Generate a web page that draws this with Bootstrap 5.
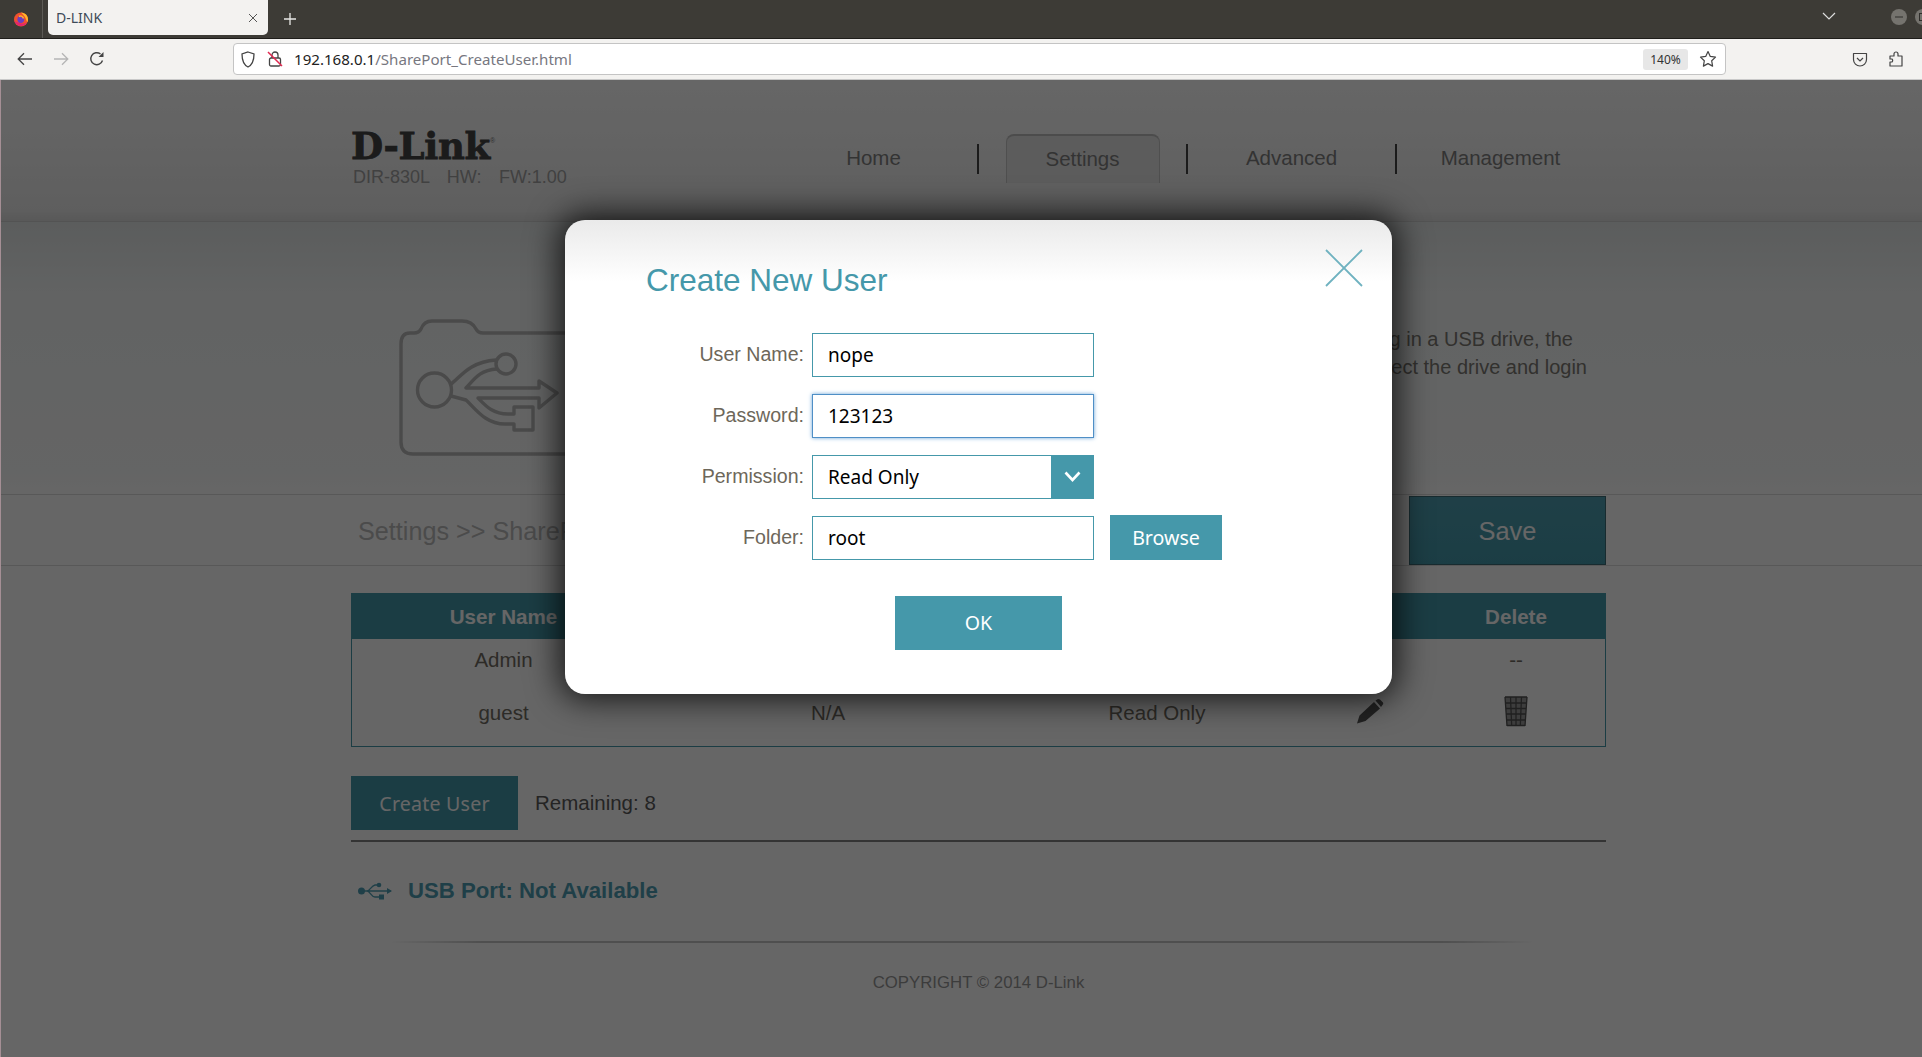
<!DOCTYPE html>
<html lang="en">
<head>
    <meta charset="UTF-8">
    <meta name="viewport" content="width=device-width, initial-scale=1.0">
    <link href="https://cdn.jsdelivr.net/npm/bootstrap@5.3.3/dist/css/bootstrap.min.css" rel="stylesheet">
    <script src="https://cdn.jsdelivr.net/npm/bootstrap@5.3.3/dist/js/bootstrap.bundle.min.js"></script>
    <title>D-LINK</title>
    <style>
        html, body { height: 100%; overflow: hidden; background: #fff; }
        body { font-family: "Liberation Sans", Arial, sans-serif; font-size: 19.6px; color: #6e6a62; }

        /* browser frame */
        .tabbar { height: 39px; width: 1956px; background: #3d3b36; border-bottom: 1px solid #1f1e1b; }
        .tabbar > * { flex: none; }
        .ff-slot { width: 43px; height: 38px; border-right: 1px solid #5c5a55; }
        .tab-item { width: 220px; height: 35px; margin-left: 5px; background: #f3f2f0; border-radius: 0 0 5px 5px; padding: 0 10px 0 8px; font: 14px "Noto Sans", sans-serif; color: #3d4a58; }
        .plus-slot { width: 44px; height: 38px; }
        .tabs-chevron { height: 32px; margin-left: 1510px; }
        .win-group { height: 34px; margin-left: 55px; }
        .win-btn { width: 16px; height: 16px; border-radius: 50%; background: #75736e; flex: none; }
        .toolbar { height: 41px; width: 1956px; padding-left: 7px; background: #f3f2f0; border-bottom: 1px solid #c9c9c9; }
        .tool-slot { width: 36px; height: 40px; flex: none; }
        .urlbar { width: 1493px; height: 32px; margin: 0 116px 0 118px; background: #fff; border: 1px solid #c4c4c4; border-radius: 4px; padding: 0 4px 0 6px; flex: none; font: 15.1px "Noto Sans", sans-serif; }
        .url-host { color: #222; }
        .url-path { color: #77777f; }
        .zoom-pill { width: 45px; height: 21px; background: #e7e7e7; border-radius: 3px; font-size: 12px; color: #333; }

        /* router page */
        .page-wrap { position: relative; height: 977px; width: 1956px; background: #fff; border-left: 1px solid #a58f95; }
        .router-head { height: 141px; background: linear-gradient(#fff 0, #f8f8f8 60px, #ececec 130px, #dedede 140px); padding-left: 350px; }
        .brand-col { width: 419px; padding-top: 49px; }
        .brand-name { font: 700 37px/34px "DejaVu Serif", serif; letter-spacing: -.3px; color: #444; white-space: nowrap; -webkit-text-stroke: .8px #444; }
        .brand-name sup { font: 400 7px "Liberation Sans", sans-serif; top: -16px; color: #777; -webkit-text-stroke: 0; }
        .brand-sub { font-size: 18px; line-height: 22px; color: #a2a2a2; word-spacing: 12.5px; margin: 3px 0 0 2px; white-space: nowrap; }
        .nav-cell { width: 207px; height: 141px; padding-top: 16px; font-size: 20.5px; color: #818181; }
        .nav-sep { width: 2px; height: 30px; margin-top: 16px; background: #444; flex: none; }
        .nav-cell.active-tab > span { width: 154px; height: 49px; background: #e6e6e6; border: 1px solid #c6c6c6; border-top: 2px solid #bdbdbd; border-bottom: 0; border-radius: 8px 8px 0 0; }

        .intro-band { height: 273px; width: 1956px; background: linear-gradient(#e4e8e8 0, #f4f7f7 70px, #fbfcfc 250px, #fff 100%); border-top: 1px solid #d0d0d0; padding: 0 351px 0 350px; }
        .folder-icon { flex: none; display: block; }
        .intro-text { font-size: 20px; line-height: 28px; color: #7d7a74; padding-top: 103px; }
        .intro-a { padding-right: 33px; }
        .intro-b { padding-right: 19px; }

        .title-band { height: 72px; width: 1956px; border-top: 1px solid #dcdcdc; border-bottom: 1px solid #dcdcdc; padding: 0 351px 0 357px; }
        .crumb { font-size: 25.2px; padding-top: 3px; color: #bcbcbc; }
        .save-btn { width: 197px; height: 69px; padding-top: 8px; border: 1px solid #3c6c77; border-radius: 0; color: #fff; font-size: 25.4px; background: linear-gradient(#4f9fb2, #459aab); }
        .save-btn:hover { color: #fff; }

        .user-box { width: 1255px; margin: 27px 0 0 350px; border: 1px solid #4598aa; border-top: 0; }
        .user-table { margin: 0; table-layout: fixed; --bs-table-bg: transparent; }
        .user-table th { height: 46px; background: #4598aa; color: #fff; font-size: 20.6px; font-weight: 700; text-align: center; vertical-align: middle; padding: 2px 0 0; }
        .user-table td { text-align: center; vertical-align: middle; color: #716c62; padding: 0; font-size: 20.5px; }
        .user-table tr.row-a td { height: 42px; }
        .user-table tr.row-b td { height: 65px; }
        .col-name { width: 303px; }
        .col-path { width: 346px; }
        .col-perm { width: 312px; }
        .col-edit { width: 114px; }
        .row-icon { display: block; margin: -5px auto 0; }

        .add-row { width: 1255px; margin: 29px 0 0 350px; padding-bottom: 10px; border-bottom: 2px solid #838383; }
        .teal-btn { background: #4598aa; color: #fff; border: 0; border-radius: 0; font: 19.6px "Noto Sans", sans-serif; }
        .teal-btn:hover, .teal-btn:focus { background: #4598aa; color: #fff; }
        .create-btn { width: 167px; height: 54px; letter-spacing: .2px; }
        .remain-text { margin-left: 17px; padding-top: 1px; color: #5a5a5a; font-size: 20.5px; }
        .usb-row { margin: 31px 0 0 357px; height: 36px; color: #4f9fb4; font-size: 22.2px; font-weight: 700; }
        .fade-line { height: 2px; margin: 32px 0 0 389px; width: 1144px; background: linear-gradient(90deg, transparent, #c6c6c6 8%, #c6c6c6 92%, transparent); }
        .copy-line { margin-top: 27px; text-align: center; font-size: 16.8px; color: #979797; }

        /* dialog */
        .dim-layer { position: absolute; inset: 0; background: rgba(0, 0, 0, .6); padding-top: 140px; }
        .dialog-box { position: relative; width: 827px; height: 474px; border-radius: 20px; background: linear-gradient(#eaeaea 0, #fff 62px); box-shadow: 0 0 32px 6px rgba(0, 0, 0, .75); padding: 42px 0 0 81px; }
        .dialog-title { font-size: 31.5px; line-height: 36px; font-weight: 400; color: #4598aa; margin: 0 0 35px; }
        .close-x { position: absolute; right: 29px; top: 29px; }
        .form-line { height: 44px; margin-bottom: 16.9px; margin-left: -81px; }
        .form-line label { width: 239px; text-align: right; margin: 0 8px 0 0; color: #6d675a; font-size: 19.6px; }
        .field-wide { width: 282px; height: 44px; }
        .router-input { border: 1px solid #4598aa; border-radius: 0; padding: 0 15px; color: #000; font: 19px "Noto Sans", sans-serif; }
        .router-input.is-focused { border-color: #4f8fc6; box-shadow: 0 0 4px #6aa5d8; }
        .select-input { border: 1px solid #4598aa; background: #fff; }
        .select-input select { flex: 1; min-width: 0; border: 0; background: #fff; appearance: none; padding: 0 15px; font: 19px "Noto Sans", sans-serif; color: #000; }
        .select-arrow { width: 43px; margin: -1px -1px -1px 0; background: #4598aa; flex: none; }
        .browse-btn { width: 112px; height: 45px; margin-left: 16px; padding: 0; }
        .ok-btn { width: 167px; height: 54px; padding: 0; margin: 36px 0 0 249px; display: block; }
    </style>
</head>
<body>
    <div class="tabbar d-flex align-items-start">
        <div class="ff-slot d-flex align-items-center justify-content-center">
            <svg width="16" height="16" viewBox="0 0 16 16">
                <circle cx="8" cy="8.500" r="7" fill="#f0502e"/>
                <path d="M8 1.500c4 .3 7 3 7 7 0 1-.3 2-.7 2.800L12 6 9.500 3z" fill="#ffb52a"/>
                <path d="M1.500 10c1 3 3.500 5 6.500 5s5-1.500 6-3.500C12 13 9 13 6.500 12z" fill="#e3246f"/>
                <circle cx="7.800" cy="8.500" r="3.400" fill="#6a3ec2"/>
                <path d="M6 5.500c2-1 4 0 4.500 2" stroke="#ffb52a" stroke-width="1.500" fill="none"/>
            </svg>
        </div>
        <div class="tab-item d-flex align-items-center">
            <span class="flex-grow-1">D-LINK</span>
            <svg width="10" height="10" viewBox="0 0 10 10"><path d="M1 1l8 8M9 1l-8 8" stroke="#555" stroke-width="1"/></svg>
        </div>
        <div class="plus-slot d-flex align-items-center justify-content-center">
            <svg width="14" height="14" viewBox="0 0 14 14"><path d="M7 1v12M1 7h12" stroke="#e8e8e6" stroke-width="1.300"/></svg>
        </div>
        <div class="tabs-chevron d-flex align-items-center">
            <svg width="14" height="8" viewBox="0 0 14 8"><path d="M1 1l6 6 6-6" stroke="#ddd" stroke-width="1.200" fill="none"/></svg>
        </div>
        <div class="win-group d-flex align-items-center gap-2">
            <span class="win-btn d-flex align-items-center justify-content-center"><svg width="8" height="2"><path d="M0 1h8" stroke="#2f2e2b"/></svg></span>
            <span class="win-btn d-flex align-items-center justify-content-center"><svg width="9" height="8"><rect x=".5" y=".5" width="8" height="7" stroke="#2f2e2b" fill="none"/></svg></span>
        </div>
    </div>
    <div class="toolbar d-flex align-items-center">
        <div class="tool-slot d-flex align-items-center justify-content-center">
            <svg width="16" height="14" viewBox="0 0 16 14"><path d="M15 7H1.500M7 1.200L1.200 7 7 12.800" stroke="#444" stroke-width="1.300" fill="none"/></svg>
        </div>
        <div class="tool-slot d-flex align-items-center justify-content-center">
            <svg width="16" height="14" viewBox="0 0 16 14"><path d="M1 7h13.500M9 1.200L14.800 7 9 12.800" stroke="#b5b5b5" stroke-width="1.300" fill="none"/></svg>
        </div>
        <div class="tool-slot d-flex align-items-center justify-content-center">
            <svg width="16" height="16" viewBox="0 0 16 16"><path d="M13.500 9.500A6 6 0 1 1 11.500 3" stroke="#444" stroke-width="1.400" fill="none"/><path d="M14.500 1v5h-5z" fill="#444"/></svg>
        </div>
        <div class="urlbar d-flex align-items-center">
            <svg width="16" height="17" viewBox="0 0 16 17"><path d="M8 1l6 2c0 6-1 10.500-6 13C3 13.500 2 9 2 3z" stroke="#444" stroke-width="1.300" fill="none"/></svg>
            <svg width="16" height="18" viewBox="0 0 16 18" style="margin-left:11px"><rect x="2.500" y="8" width="11" height="8" rx="1.500" stroke="#444" stroke-width="1.300" fill="none"/><path d="M5 8V5a3 3 0 0 1 6 0v3" stroke="#444" stroke-width="1.300" fill="none"/><path d="M1 2l14 14" stroke="#e22850" stroke-width="1.500"/></svg>
            <span style="margin-left:11px"><span class="url-host">192.168.0.1</span><span class="url-path">/SharePort_CreateUser.html</span></span>
            <span class="ms-auto zoom-pill d-flex align-items-center justify-content-center">140%</span>
            <svg width="18" height="18" viewBox="0 0 18 18" style="margin:0 4px 0 11px"><path d="M9 1.500l2.300 4.900 5.200.7-3.800 3.700.9 5.300L9 13.600l-4.600 2.500.9-5.300L1.500 7.100l5.200-.7z" stroke="#444" stroke-width="1.200" fill="none" stroke-linejoin="round"/></svg>
        </div>
        <div class="tool-slot d-flex align-items-center justify-content-center">
            <svg width="16" height="15" viewBox="0 0 16 15"><path d="M1.500 1.500h13v6a6.500 6.500 0 0 1-13 0z" stroke="#444" stroke-width="1.200" fill="none" stroke-linejoin="round"/><path d="M5 6l3 3 3-3" stroke="#444" stroke-width="1.200" fill="none"/></svg>
        </div>
        <div class="tool-slot d-flex align-items-center justify-content-center">
            <svg width="16" height="18" viewBox="0 0 16 18"><path d="M2 6h4V4a2 2 0 0 1 4 0v2h4v10H2v-4h2a2 2 0 0 0 0-3H2z" stroke="#444" stroke-width="1.200" fill="none" stroke-linejoin="round"/></svg>
        </div>
    </div>

    <div class="page-wrap">
        <div class="router-head d-flex">
            <div class="brand-col">
                <div class="brand-name">D-Link<sup>®</sup></div>
                <div class="brand-sub">DIR-830L HW: FW:1.00</div>
            </div>
            <div class="nav-cell d-flex align-items-center justify-content-center">Home</div>
            <div class="nav-sep align-self-center"></div>
            <div class="nav-cell active-tab d-flex align-items-center justify-content-center"><span class="d-flex align-items-center justify-content-center">Settings</span></div>
            <div class="nav-sep align-self-center"></div>
            <div class="nav-cell d-flex align-items-center justify-content-center">Advanced</div>
            <div class="nav-sep align-self-center"></div>
            <div class="nav-cell d-flex align-items-center justify-content-center">Management</div>
        </div>

        <div class="intro-band d-flex">
            <svg class="folder-icon" width="225" height="272">
                <g transform="translate(-11 -20)" fill="none" stroke="#b8b8b8" stroke-width="3.400" stroke-linejoin="round">
                    <path d="M236 131H143Q138 131 136 127 132 119 122 119H92Q84 119 81 127 79 131 74 131H70Q61 131 61 142V240Q61 252 73 252H236"/>
                    <circle cx="94.500" cy="188" r="17"/>
                    <circle cx="166" cy="162" r="10"/>
                    <path d="M111 182C120 176 128 160 156 158M157 167C140 168 135 176 126 186H199V179L217 191 199 206V196H138C145 203 152 212 168 212H174V205H193V228H174V222H165C145 222 135 206 126 198L111 194"/>
                </g>
            </svg>
            <div class="intro-text flex-grow-1 text-end">
                <div class="intro-a">plugging in a USB drive, the</div>
                <div class="intro-b">connect the drive and login</div>
            </div>
        </div>

        <div class="title-band d-flex align-items-center justify-content-between">
            <div class="crumb">Settings &gt;&gt; SharePort</div>
            <button class="btn save-btn d-flex align-items-center justify-content-center" type="button">Save</button>
        </div>

        <div class="user-box">
            <table class="table table-borderless user-table">
                <colgroup><col class="col-name"><col class="col-path"><col class="col-perm"><col class="col-edit"><col></colgroup>
                <thead>
                    <tr><th>User Name</th><th>Access Path</th><th>Permission</th><th>Edit</th><th>Delete</th></tr>
                </thead>
                <tbody>
                    <tr class="row-a"><td>Admin</td><td>/</td><td>Read/Write</td><td>--</td><td>--</td></tr>
                    <tr class="row-b">
                        <td>guest</td><td>N/A</td><td>Read Only</td>
                        <td>
                            <svg class="row-icon" width="27" height="25" viewBox="0 0 27 25"><path d="M0 24.500L2.500 16.500 17 3 23 9.500 8.500 22zM18.500 1.500L21 0q1.200 0 2 .5L26 3.500q.8 1.500-.5 2.500L24 8z" fill="#555"/></svg>
                        </td>
                        <td>
                            <svg class="row-icon" width="24" height="31" viewBox="0 0 24 31"><path d="M1 1h22l-2 29H3z" fill="#9a9a9a"/><path d="M1 1h22M1.500 7h21M2 12.500h20M2.500 18h19M3 24h18M3 29.500h18M6.500 1l1.200 29M12 1v29M17.500 1l-1.200 29M1 1l2 29M23 1l-2 29" stroke="#505050" stroke-width="1.300" fill="none"/></svg>
                        </td>
                    </tr>
                </tbody>
            </table>
        </div>

        <div class="add-row d-flex align-items-center">
            <button class="btn teal-btn create-btn" type="button">Create User</button>
            <span class="remain-text">Remaining: 8</span>
        </div>

        <div class="usb-row d-flex align-items-center">
            <svg width="34" height="18" viewBox="0 0 34 18" class="me-3"><circle cx="3.500" cy="9" r="3.500" fill="#4f9fb4"/><path d="M4 9h29M9 9c3 0 4-5 8-6h3M9 9c3 0 4 6 8 6h5" stroke="#4f9fb4" stroke-width="1.300" fill="none"/><circle cx="21" cy="3" r="2.300" fill="#4f9fb4"/><rect x="21" y="12.500" width="5" height="5" fill="#4f9fb4"/><path d="M34 9l-5-3v6z" fill="#4f9fb4"/></svg>
            <span>USB Port: Not Available</span>
        </div>

        <div class="fade-line"></div>
        <div class="copy-line">COPYRIGHT © 2014 D-Link</div>

        <div class="dim-layer d-flex justify-content-center align-items-start">
            <div class="dialog-box">
                <button type="button" class="close-x btn p-0 border-0" aria-label="Close">
                    <svg class="d-block" width="38" height="38" viewBox="0 0 38 38"><path d="M1 1l36 36M37 1L1 37" stroke="#6fb2c0" stroke-width="1.800"/></svg>
                </button>
                <h1 class="dialog-title">Create New User</h1>
                <div class="form-line d-flex align-items-center">
                    <label for="userName">User Name:</label>
                    <input id="userName" class="field-wide router-input" type="text" value="nope">
                </div>
                <div class="form-line d-flex align-items-center">
                    <label for="userPass">Password:</label>
                    <input id="userPass" class="field-wide router-input is-focused" type="text" value="123123">
                </div>
                <div class="form-line d-flex align-items-center">
                    <label for="userPerm">Permission:</label>
                    <div class="field-wide select-input d-flex">
                        <select id="userPerm"><option>Read Only</option><option>Read/Write</option></select>
                        <span class="select-arrow d-flex align-items-center justify-content-center">
                            <svg width="17" height="11" viewBox="0 0 17 11"><path d="M1.500 1.500l7 7.500 7-7.500" stroke="#fff" stroke-width="2.600" fill="none"/></svg>
                        </span>
                    </div>
                </div>
                <div class="form-line d-flex align-items-center">
                    <label for="userFolder">Folder:</label>
                    <input id="userFolder" class="field-wide router-input" type="text" value="root">
                    <button class="btn teal-btn browse-btn" type="button">Browse</button>
                </div>
                <button class="btn teal-btn ok-btn" type="button">OK</button>
            </div>
        </div>
    </div>
</body>
</html>
